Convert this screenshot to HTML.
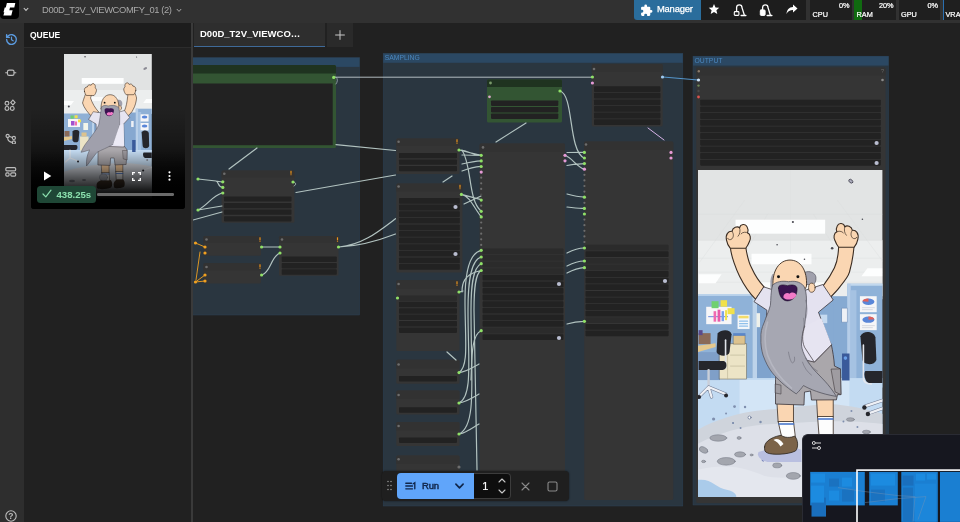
<!DOCTYPE html><html><head><meta charset="utf-8"><title>ComfyUI</title><style>
*{box-sizing:border-box;margin:0;padding:0}
html,body{width:960px;height:522px;overflow:hidden;background:#212121;font-family:"Liberation Sans",sans-serif;}
#app{position:relative;width:960px;height:522px;overflow:hidden;background:#212121;will-change:transform}
.abs{position:absolute}
#topbar{position:absolute;left:0;top:0;width:960px;height:23px;background:#2c2c2c}
#sidebar{position:absolute;left:0;top:23px;width:24.4px;height:499px;background:#2e2e2e}
#queue{position:absolute;left:24px;top:23px;width:167px;height:499px;background:#212121}
#qhead{position:absolute;left:0;top:0;width:167px;height:25px;background:#1d1d1d;border-bottom:1px solid #2c2c2c;color:#fff;font-size:8.5px;font-weight:bold;line-height:24px;padding-left:6px;letter-spacing:0}
#qsplit{position:absolute;left:191px;top:23px;width:2px;height:499px;background:#2e2e2e}
.node{position:absolute;background:#353535;border-radius:1.5px}
.node .t{position:absolute;left:0;top:0;right:0;background:#323232;border-radius:1.5px 1.5px 0 0}
.w{position:absolute;background:#222;border-radius:1px}
.d{position:absolute;width:3px;height:3px;border-radius:50%}
.grp{position:absolute}
.grp .h{position:absolute;left:0;top:0;right:0}
.gt{position:absolute;font-size:6.8px;color:#4a86bd;line-height:8px;left:1.5px;top:0.6px}
.mon{position:absolute;top:0;width:41.500px;height:19.500px;background:#1f1f1f;overflow:hidden;color:#fff;font-size:7.300px;font-weight:normal;-webkit-text-stroke:.22px #fff}
.mon b{position:absolute;right:2px;top:0.5px;line-height:9px;font-weight:normal}
.mon i{position:absolute;left:2.500px;top:10px;line-height:9px;font-style:normal}
.mon u{position:absolute;left:0;top:0;height:19.500px;display:block}
</style></head><body><div id="app"><svg width="0" height="0" style="position:absolute"><defs>
<symbol id="dude" viewBox="0 0 184.6 327.7" preserveAspectRatio="none">
<g transform="translate(-698.4,-169.6)" stroke-linejoin="round" stroke-linecap="round">
<!-- ceiling -->
<rect x="698" y="169" width="186" height="130" fill="#e2e4e4"/>
<rect x="698" y="240" width="186" height="56" fill="#eceeee"/>
<g stroke="#d9dcdc" stroke-width=".5" fill="none" opacity=".7"><path d="M698 214H884M698 240H884M698 258H884M698 272H884M698 282H884M791 169V296M745 200L700 262M838 200L884 262M768 214L740 262M814 214L845 262"/></g>
<rect x="736" y="219.400" width="89.700" height="14" fill="#fdfefe"/>
<rect x="752" y="253.500" width="60" height="10.500" fill="#fdfefe"/>
<path d="M699 274H722L716 283H699Z" fill="#fdfefe"/><path d="M868 268H883V276H862Z" fill="#fdfefe"/>
<path d="M757 282H826V288H757Z" fill="#fafbfb"/>
<!-- back walls -->
<rect x="757" y="296" width="92" height="90" fill="#86aad2"/>
<rect x="820" y="314.500" width="7.800" height="8.500" fill="#c5daf0"/>
<rect x="698.400" y="294" width="55" height="92" fill="#8fb2d8"/>
<rect x="698.400" y="294" width="55" height="1.600" fill="#c2d8ee"/>
<rect x="753" y="294" width="4.500" height="92" fill="#bdd3ea"/>
<rect x="757.500" y="300" width="14" height="84" fill="#7fa3cd"/>
<rect x="834" y="297" width="14" height="86" fill="#86aad2"/>
<rect x="847.800" y="283.500" width="36" height="104" fill="#8fb2d8"/>
<rect x="847.800" y="283.500" width="36" height="2" fill="#c2d8ee"/>
<rect x="847.800" y="283.500" width="3.500" height="104" fill="#b5cde8"/>
<rect x="851" y="290" width="6" height="96" fill="#a5c2e2"/>
<!-- floor -->
<rect x="698" y="378" width="186" height="120" fill="#c3dbf2"/>
<path d="M740 380H850V420H740Z" fill="#d3e5f6"/>
<path d="M698 430C715 420 740 412 765 410C790 408 800 406 830 404C850 405 870 410 884 414V498H698Z" fill="#cfd4dc"/>
<path d="M698 444C720 432 750 424 775 424C800 424 830 418 884 424V498H698Z" fill="#dde0e8"/>
<path d="M698 470C730 462 750 470 765 476C790 482 830 470 884 474V498H698Z" fill="#e4e7ee"/>
<path d="M698 480C712 478 716 488 728 490C736 492 738 496 736 498H698Z" fill="#aacbea"/>
<!-- posters left -->
<rect x="706.600" y="306.600" width="25.400" height="17.400" fill="#f6f6f8"/>
<rect x="712" y="301" width="7" height="7" fill="#6fd070"/><rect x="721" y="300" width="6.500" height="6.500" fill="#f1e14a"/><rect x="728" y="308" width="7" height="6" fill="#f1e14a"/>
<path d="M709 316.500H728" stroke="#6a8ae0" stroke-width="1"/><rect x="714" y="311" width="2.600" height="10.500" fill="#f06ab0"/><rect x="718" y="309.500" width="2.800" height="12" fill="#e85aa8"/><rect x="722" y="311" width="2.400" height="10" fill="#7aa0ea"/><rect x="725.500" y="310" width="2" height="10" fill="#f1e14a"/>
<rect x="738" y="314.600" width="12" height="14.200" fill="#f4f7fa"/><rect x="739" y="315.600" width="10" height="2.600" fill="#f3dc6a"/><path d="M740 321H748M740 323.500H748M740 326H748" stroke="#8fc0ea" stroke-width="1.200"/>
<rect x="757" y="313" width="3.500" height="14" fill="#eef0ea"/>
<!-- posters right -->
<rect x="860.500" y="296" width="16.800" height="16" fill="#f6f6f8"/><ellipse cx="869" cy="301.500" rx="6" ry="3.200" fill="#5a86d8"/><path d="M869 301.500L863 301A6 3.200 0 0 1 869 298.300Z" fill="#e0605a"/><path d="M863 307.500H875M863 309.500H873" stroke="#cfd2da" stroke-width=".8"/>
<rect x="860.500" y="314" width="16.800" height="16" fill="#f6f6f8"/><ellipse cx="869" cy="319.500" rx="6" ry="3.200" fill="#5a86d8"/><path d="M869 319.500L875 319A6 3.200 0 0 0 869 316.300Z" fill="#e0605a"/><path d="M863 325.500H875M863 327.500H873" stroke="#cfd2da" stroke-width=".8"/>
<rect x="842.500" y="308" width="5.500" height="14" fill="#eef1f6" stroke="#6e8cb4" stroke-width=".5"/>

<!-- left desk, boxes -->
<path d="M698.400 345.600L716 343V347L698.400 352Z" fill="#e6c98e"/>
<rect x="699" y="333" width="12" height="11" fill="#8a6a58"/><rect x="699" y="330" width="4" height="5" fill="#5a4a8a"/>
<rect x="698.400" y="352" width="22" height="28" fill="#7f9fc8"/>
<!-- cabinet -->
<rect x="720" y="343.500" width="27" height="35.500" fill="#ece4c6" stroke="#5a5a50" stroke-width=".5"/>
<path d="M728 344V379" stroke="#b9b294" stroke-width=".6"/><path d="M731 355H745M731 366H745" stroke="#b9b294" stroke-width=".6"/>
<rect x="734" y="335" width="11.500" height="9" fill="#dcc28e" stroke="#5a5040" stroke-width=".4"/><rect x="733.600" y="333" width="12.300" height="2.600" fill="#5a86c8"/>
<!-- left chair -->
<path d="M718 333C722 329 731 329 732 334L730 352C729 357 719 357 717 352Z" fill="#25262c"/>
<path d="M726 340V368" stroke="#dfe3ea" stroke-width="1.600"/>
<path d="M699 361H724C728 361 728 370 723 370H699Z" fill="#25262c"/>
<path d="M709 370V388" stroke="#c9ced8" stroke-width="2.400"/>
<path d="M709 387L726 394M709 387L700 396M709 387L712 397" stroke="#6f7a92" stroke-width="3.200"/><path d="M709 387L726 394M709 387L700 396M709 387L712 397" stroke="#eef0f5" stroke-width="2.200"/>
<circle cx="726.500" cy="395.500" r="2" fill="#25262c"/><circle cx="699.500" cy="397" r="2" fill="#25262c"/>
<!-- right chair, trash -->
<rect x="842.600" y="353.400" width="7.500" height="27" fill="#3a5a9a"/><circle cx="846" cy="358" r="1.800" fill="#6aa0e8"/>
<path d="M861 336C864 330 874 331 876 337L877 360C875 366 864 365 863 360Z" fill="#25262c"/>
<path d="M864 345V378C864 383 868 384 872 384" stroke="#e4e7ee" stroke-width="1.600" fill="none"/>
<path d="M866 371H884V383H870C865 383 864 372 866 371Z" fill="#25262c"/>
<path d="M884 400L866 406M884 408L870 413" stroke="#6f7a92" stroke-width="3.400"/><path d="M884 400L866 406M884 408L870 413" stroke="#eef0f5" stroke-width="2.400"/>
<circle cx="865" cy="407.500" r="2.200" fill="#25262c"/><circle cx="868.500" cy="414" r="2.200" fill="#25262c"/>
<!-- rocks -->
<g fill="#a3a6ae" stroke="#6f7380" stroke-width=".5">
<ellipse cx="718.700" cy="438" rx="8.500" ry="3.200"/><ellipse cx="704" cy="450" rx="4.500" ry="2.800" transform="rotate(25 704 450)"/><ellipse cx="740.500" cy="454.500" rx="5.500" ry="2.600"/><ellipse cx="726.700" cy="461.400" rx="9" ry="3.800"/><ellipse cx="777.700" cy="465.500" rx="4.500" ry="2.400"/><ellipse cx="793.800" cy="476" rx="7" ry="3.400"/><ellipse cx="704" cy="461.500" rx="2" ry="1.200"/><ellipse cx="739.500" cy="438" rx="2" ry="1.400"/><ellipse cx="752" cy="455" rx="1.500" ry="1"/>
<ellipse cx="851" cy="419.500" rx="4" ry="1.800"/><ellipse cx="867" cy="432" rx="4" ry="1.800"/>
</g>
<g fill="#7f8fae"><circle cx="735" cy="406.500" r="1.400"/><circle cx="745.500" cy="407" r="1.200"/><circle cx="726.500" cy="413.500" r="1"/><circle cx="714" cy="419" r="1.600"/><circle cx="733.500" cy="423" r=".9"/><circle cx="761" cy="422" r="1.200"/><circle cx="741" cy="428" r="1"/><circle cx="733.500" cy="423" r="1"/><circle cx="852" cy="411" r="1"/><circle cx="858" cy="427" r="1"/><circle cx="844" cy="421.500" r="1"/></g>
<circle cx="750" cy="417.500" r="1.500" fill="#fff" stroke="#4a5a80" stroke-width=".6"/>
<ellipse cx="764.600" cy="459.300" rx="2.400" ry="1.300" transform="rotate(-40 764.600 459.300)" fill="#b9c4ea" stroke="#4a5a9a" stroke-width=".6"/>
<!-- shoe shadow -->
<path d="M759 452C770 448 795 446 802 450V462H768C760 460 757 456 759 452Z" fill="#b9bfe0"/>
<!-- legs -->
<g stroke="#3a2c22" stroke-width=".8">
<path d="M777.800 402H794V422H779Z" fill="#fad6b2"/>
<path d="M817.400 398H833.800V417H818.500Z" fill="#fad6b2"/>
<path d="M779 421.500H794L796 438L783 439Z" fill="#fdfdfd"/>
<path d="M818.500 416.500H833.800L833.800 436H820Z" fill="#fdfdfd"/>
</g>
<path d="M779.400 424H794.200" stroke="#3f6fc8" stroke-width="1.300"/><path d="M818.800 419H833.600" stroke="#3f6fc8" stroke-width="1.300"/>
<path d="M765 447C765 440 776 436 782 435.300C784 438 792 438 795 436C799 440 799 448 796 451C788 455 772 455 768 453C765 452 765 450 765 447Z" fill="#7b6349" stroke="#2a2420" stroke-width=".8"/>
<path d="M774 440C777 438 781 439 784 444L781 446.500C779 443 777 441.500 774 440Z" fill="#fdfdfd"/>
<!-- arms -->
<g fill="#fad6b2" stroke="#3a2c22" stroke-width="1.100">
<path d="M730.800 247C731.500 256 737 270 740 276C745 286 750 293 756 299L764.500 286.600C758 280 754 272 752 267.600C749 262 747.500 255 746.200 247Z"/>
<path d="M839.200 246C839 254 837.500 262 835 267.600C832 274 828 280 823.600 285.600L830 298C834 294 838 290 840.400 286.600C846 280 849 276 850 272C852 265 853.800 256 854.600 246Z"/>
<g id="fist"><path d="M727 240C725.500 234 729 230.500 732.500 231C733 227 738 225.500 740 227.500C741 223.500 746 223 747.500 226.500C749 229 748.500 231 748 232.500C751 234 751.500 238 750 241C748.500 245 747 247 746.200 248L730.800 248C729 246 727.500 243 727 240Z"/>
<path d="M732.500 231C734 233 734.500 236 732.500 238.500C731 240 728.500 239.500 728 238M740 227.500C741 230 740.500 234 738.500 236M741.500 233.500C743 231.500 747 231.500 748 232.500" fill="none" stroke-width=".7"/></g>
<use href="#fist" transform="translate(1585.400,-1) scale(-1,1)"/>
</g>
<!-- shorts -->
<path d="M776 380L776 404L804.500 405L805 392L811 391L812 400L837 399.800L838 394.600L841.500 394.600L841 368.800L835 366C834.600 358 833 350 832 345L780 347Z" fill="#aaa7ab" stroke="#3a3438" stroke-width=".8"/>
<path d="M832 369L841 368.800L841.500 394.600L836 392Z" fill="#9f9ca1" stroke="#3a3438" stroke-width=".6"/>
<path d="M776 384L781.500 385L781.500 394L776 393Z" fill="#9f9ca1" stroke="#3a3438" stroke-width=".5"/>
<!-- shirt -->
<path d="M764 287L754.500 301.500L767.400 310L766 330L764 350L815 362L832 344.600L829.500 340L819 312L833.800 299.800L823.400 284.300L806 290L775 290Z" fill="#e4e2f0" stroke="#3a3438" stroke-width=".8"/>
<!-- hair/ear -->
<path d="M805.500 272C810 270 816 272.500 816.500 277C817 281 815 284 813 285L806 284Z" fill="#a0a0ac" stroke="#4a4a55" stroke-width=".6"/>
<path d="M773.500 275C772 278 771.500 284 772.500 290" stroke="#a0a0ac" stroke-width="2.200" fill="none"/>
<ellipse cx="812.400" cy="287.500" rx="3.300" ry="4.600" fill="#fad6b2" stroke="#3a2c22" stroke-width=".7"/>
<!-- head -->
<path d="M773.400 286C772.500 270 780 259.800 790.500 259.800C801 259.800 808 270 807 286C804 296 777 296 773.400 286Z" fill="#fad6b2" stroke="#3a2c22" stroke-width=".9"/>
<circle cx="779" cy="276.500" r="1.500" fill="#111"/><circle cx="798.400" cy="276.500" r="1.500" fill="#111"/>
<!-- beard -->
<path d="M773 285C771 292 771.500 299 770.900 305C769 312 766 318 764.800 322C762 328 761 333 761.400 338C761 344 762 350 763.500 355C766 362 769 368 773 373C778 379 785 386 796.700 393.800C800 391 802 388 804 385.500C810 389 822 394 837 396.400C833 390 829 385 826 381.700C820 375 814 370 810.500 364.500C806 358 802 350 802 343.800C802 336 804 330 805.300 324C806 316 807.500 308 807 299.800C807 294 806 289 804.500 286C800 281 795 280.500 789 281.500C783 280.500 777 281 773 285Z" fill="#a6a7b2" stroke="#55555f" stroke-width=".8"/>
<path d="M768 322C765 332 765 345 768 355C772 366 780 378 792 388" stroke="#b9bac4" stroke-width="1.600" fill="none" opacity=".8"/>
<path d="M789 352C790 358 791 361 793 363C795 362 795.500 360 795 357M803 362C805 368 808 372 812 375M806 358C809 364 813 368 818 371" stroke="#6e6f7a" stroke-width=".6" fill="none"/>
<path d="M806 300C808 305 808 312 806.500 318M804 318C805 324 804 330 803.500 336" stroke="#7f808b" stroke-width=".6" fill="none"/>
<!-- mouth -->
<path d="M779 288C778.500 284.500 783 284 788 285.500C792 284 798 284.500 797.600 289C797.500 296 793 300.700 788 300.700C783 300.700 779.500 296 779 288Z" fill="#3a1450" stroke="#1a0a25" stroke-width=".6"/>
<path d="M783.800 297C784 293 788 292 790 293.500C792 291.500 796.500 292 796.700 295C796 299.500 786 301 783.800 297Z" fill="#f27ac8"/>
<!-- shirt flap over beard -->
<path d="M805.300 326L822 318L832 344.600L814.800 362L805 347C802 340 803 333 805.300 326Z" fill="#e6e4f1"/><path d="M832 344.600L814.800 362L805 347C802 340 803 333 805.300 326" fill="none" stroke="#3a3438" stroke-width=".7"/>
<!-- debris -->
<ellipse cx="851.400" cy="180.800" rx="2.300" ry="1.600" transform="rotate(40 851.400 180.800)" fill="#aab" stroke="#4a4a55" stroke-width=".8"/>
<g fill="#4a4a52"><circle cx="793.400" cy="221.700" r="1.100"/><circle cx="863" cy="219" r=".8"/><circle cx="777.600" cy="244.500" r=".8"/><circle cx="832.700" cy="248" r="1.300"/><circle cx="805" cy="259" r=".8"/></g>
</g>
</symbol><symbol id="dude2" viewBox="0 0 87.600 155.700" preserveAspectRatio="none">
<g transform="translate(-64,-54)" stroke-linejoin="round" stroke-linecap="round">
<rect x="63" y="53" width="90" height="60" fill="#e1e3e3"/>
<rect x="63" y="90" width="90" height="24" fill="#eceeee"/>
<rect x="81.700" y="78" width="41.800" height="5.800" fill="#fdfefe"/>
<rect x="88" y="97" width="30" height="4" fill="#fafbfb"/>
<path d="M64 101H74L71 105H64Z" fill="#fdfefe"/><path d="M146 99H152V103H143Z" fill="#fdfefe"/>
<!-- walls -->
<rect x="63" y="113.500" width="30" height="40" fill="#8fb0d5"/>
<rect x="92" y="114" width="3" height="40" fill="#bdd3ea"/>
<rect x="94" y="112.500" width="43" height="42" fill="#86a8d0"/>
<rect x="135.600" y="108.700" width="17" height="48" fill="#8fb0d5"/>
<rect x="135.600" y="108.700" width="2.400" height="48" fill="#b8cfe8"/>
<rect x="138" y="112" width="3" height="44" fill="#a5c2e2"/>
<!-- floor -->
<rect x="63" y="150" width="90" height="60" fill="#c3daf0"/>
<path d="M63 172C80 166 100 164 120 163C135 163 145 165 153 167V210H63Z" fill="#d3d7de"/>
<!-- posters -->
<rect x="68" y="119" width="12" height="8" fill="#f6f6f8"/><rect x="70.500" y="115.500" width="3.200" height="3.200" fill="#6fd070"/><rect x="74.600" y="115.300" width="3" height="3" fill="#f1e14a"/><rect x="78" y="119.500" width="3" height="2.800" fill="#f1e14a"/>
<rect x="71" y="121" width="3.500" height="4.500" fill="#a050d0"/><rect x="75" y="121.500" width="2" height="4" fill="#f06ab0"/>
<rect x="83.300" y="123" width="4.700" height="7" fill="#f2f5ea"/>
<rect x="140.400" y="114.300" width="8" height="7.200" fill="#f6f6f8"/><ellipse cx="144.400" cy="117" rx="2.800" ry="1.500" fill="#5a86d8"/>
<rect x="140.400" y="123" width="8" height="7.400" fill="#f6f6f8"/><ellipse cx="144.400" cy="126" rx="2.800" ry="1.500" fill="#5a86d8"/>
<rect x="131" y="121" width="2.500" height="6" fill="#eef1f6"/>
<!-- furniture -->
<path d="M64 137L72 136V139L64 141Z" fill="#e6c98e"/><rect x="64.500" y="131" width="5" height="5.500" fill="#8a6a58"/>
<rect x="80" y="136.500" width="8.500" height="14" fill="#ece4c6"/><rect x="81.500" y="132.500" width="5" height="4" fill="#dcc28e"/>
<path d="M72.500 131.500C74 129.500 79 129.500 79.300 132L78.500 140.500C78 143 73.500 143 72.500 140.500Z" fill="#25262c"/>
<path d="M64 145H76C78 145 78 150 75.500 150H64Z" fill="#25262c"/>
<path d="M70 150V158L78 161M70 158L65.500 162" stroke="#dfe3ea" stroke-width="1.200" fill="none"/>
<circle cx="78" cy="161.500" r="1" fill="#25262c"/>
<path d="M141.500 132.500C143 129.500 148 130 148.600 133L149 146C148 149 143 149 142.500 146Z" fill="#25262c"/>
<path d="M143.500 152.500H152V158H145C142.500 158 142.500 153 143.500 152.500Z" fill="#25262c"/>
<path d="M152 167L143.500 170" stroke="#dfe3ea" stroke-width="1.200"/><circle cx="143" cy="170.500" r="1.100" fill="#25262c"/>
<rect x="132" y="140" width="3.400" height="12" fill="#3a5a9a"/>
<!-- legs -->
<g stroke="#3a2c22" stroke-width=".5">
<path d="M101.500 164H109V173H102Z" fill="#f0c79a"/><path d="M115.500 164H122.700V172H116Z" fill="#f0c79a"/>
<path d="M102 172.500H109L109.500 181H103.500Z" fill="#f4f4f4"/><path d="M116 171.500H122.700V180H116.500Z" fill="#f4f4f4"/>
</g>
<path d="M102 174H109M116 173.500H122.700" stroke="#3f6fc8" stroke-width=".8"/>
<path d="M96.500 185C96.500 181.500 101 180 104 179.500C106 181 109 181 110.500 180C112.500 182 112.500 186 111 187.500C107 189.500 99 189.500 97.500 188.500C96.500 188 96.500 187 96.500 185Z" fill="#4a3a2c"/>
<path d="M113.500 184C114 181 116 180 117 179.500H123C125 181 125 186 123.500 187C120 188.500 115 188.500 114 187.500Z" fill="#4a3a2c"/>
<ellipse cx="103.400" cy="177.300" rx="4" ry="3.300" fill="#b9bcc6" stroke="#6f7380" stroke-width=".4"/>
<!-- arms -->
<g fill="#fad6b2" stroke="#3a2c22" stroke-width=".6">
<path d="M85.500 94C84 98 83 101 82.500 103C84 108 88 113 92 116.700L98.600 112C95 108 92 103 90.500 98C91 96 91.500 95 92 94Z"/>
<path d="M127.500 93C127.500 95 127.800 96 127.500 96.600C127 102 126 107 124.300 111L126.700 116.700C130 114 132 112 133 109.500C135 106 136 102 136.400 98C136 96 135.500 94.500 134.500 93Z"/>
<path d="M84.400 91.500C83.600 88.500 85.500 86.700 87.200 87C87.500 85 89.800 84.200 91 85.300C91.500 83.300 94 83 94.800 84.800C95.500 86 95.300 87 95 87.700C96.500 88.500 96.700 90.500 96 92C95.300 94 94.500 95 94 95.500L86.300 95.500C85.400 94.500 84.700 93 84.400 91.500Z"/>
<path d="M135.600 90.700C136.400 87.700 134.500 85.900 132.800 86.200C132.500 84.200 130.200 83.400 129 84.500C128.500 82.500 126 82.200 125.200 84C124.500 85.200 124.700 86.200 125 86.900C123.500 87.700 123.300 89.700 124 91.200C124.700 93.200 125.500 94.200 126 94.700L133.700 94.700C134.600 93.700 135.300 92.200 135.600 90.700Z"/>
</g>
<!-- shorts -->
<path d="M98 146L97.800 165L110 165.500L110.500 158L114 158L115 165L126 164.500L127 150L124 146Z" fill="#aaa7ab" stroke="#3a3438" stroke-width=".5"/>
<path d="M122.700 150.500H127L127 160L123.500 159Z" fill="#9a979c" stroke="#3a3438" stroke-width=".4"/>
<!-- shirt -->
<path d="M93 112L88.500 119.500L96 124L97 146L124 147L123.500 124L129.500 117.500L124.300 110.500L116 113H102Z" fill="#e6e4f1" stroke="#3a3438" stroke-width=".5"/>
<!-- head -->
<path d="M117.500 100C120 99 122.500 101 122.200 104C122 106 121 107 120 107.500L117 106Z" fill="#a0a0ac"/>
<ellipse cx="119.700" cy="108" rx="1.700" ry="2.400" fill="#fad6b2" stroke="#3a2c22" stroke-width=".4"/>
<path d="M101 109C100.500 100 104.500 94.700 110 94.700C115.500 94.700 119.200 100 118.700 109C117 114 103 114 101 109Z" fill="#fad6b2" stroke="#3a2c22" stroke-width=".6"/>
<circle cx="104.500" cy="102.700" r=".9" fill="#111"/><circle cx="114.700" cy="102.700" r=".9" fill="#111"/>
<!-- beard -->
<path d="M101.500 107C103 105 106 105 108 106C111 105 116 105 118.500 107.500C120 112 119.500 120 119.500 125C118 133 116 139 113 144.300C107 148 101 150 97 152.300C93 157 90 162 86.500 166C86 160 87 155 89.500 150C86 151 83 152 81 152.300C83 147 86 143 89 139.500C93 134 97 129 98.600 125C100 119 100.500 112 101.500 107Z" fill="#a0a0ac" stroke="#55555f" stroke-width=".5"/>
<path d="M104.500 110C104.300 108 107 107.800 109 108.500C111 107.800 114 108 113.800 110.500C113.700 114 111.500 116.200 109 116.200C106.500 116.200 104.800 114 104.500 110Z" fill="#3a1450"/>
<path d="M106.500 114C107 112 109 111.800 110 112.500C111 111.500 113 112 113 113.500C112.500 115.800 107.500 116.300 106.500 114Z" fill="#f27ac8"/>
<path d="M113 144.300L119.500 125L123.500 124L124 146Z" fill="#eceaf5"/>
<!-- debris -->
<g fill="#4a4a52"><circle cx="85" cy="56.800" r=".8"/><circle cx="136.400" cy="57" r=".6"/><circle cx="68.800" cy="106.600" r="1"/></g>
<ellipse cx="145" cy="68.500" rx="2" ry="1.100" transform="rotate(-25 145 68.500)" fill="#8a8a94"/>
<g fill="#8a8d98"><ellipse cx="72" cy="181" rx="3" ry="1.200"/><ellipse cx="84" cy="180" rx="2" ry="1"/><circle cx="147" cy="160" r="1"/><circle cx="141" cy="176" r=".8"/></g>
</g>
</symbol></defs></svg>

<div id="canvas" class="abs" style="left:193px;top:47px;width:767px;height:475px;overflow:hidden">
<svg class="abs" style="left:0;top:0" width="767" height="475" viewBox="193 47 767 475"><rect x="180.0" y="57.7" width="179.5" height="257.3" fill="#2a3640" stroke="#2c4256" stroke-width=".5"/><rect x="180.0" y="57.7" width="179.5" height="9.2" fill="#2b4863"/><rect x="383.2" y="53.5" width="299.6" height="452.5" fill="#2a3640" stroke="#2c4256" stroke-width=".5"/><rect x="383.2" y="53.5" width="299.6" height="9.3" fill="#2b4863"/><text x="384.7" y="60.4" font-size="6.8" fill="#4a86bd" font-family="Liberation Sans, sans-serif">SAMPLING</text><rect x="693.0" y="56.2" width="195.5" height="448.8" fill="#2a3640" stroke="#2c4256" stroke-width=".5"/><rect x="693.0" y="56.2" width="195.5" height="9.4" fill="#2b4863"/><text x="694.5" y="63.1" font-size="6.8" fill="#4a86bd" font-family="Liberation Sans, sans-serif">OUTPUT</text><rect x="180.0" y="65.0" width="156.0" height="83.0" rx="1.5" fill="#335533"/><path d="M180.0 73.4V66.5a1.5 1.5 0 0 1 1.5 -1.5H334.5a1.5 1.5 0 0 1 1.5 1.5V73.4Z" fill="#1f3320"/><rect x="180" y="83.5" width="152.7" height="61.7" fill="#222"/><rect x="221.6" y="170.5" width="72.8" height="52.3" rx="1.5" fill="#353535"/><path d="M221.6 177.5V172.0a1.5 1.5 0 0 1 1.5 -1.5H292.9a1.5 1.5 0 0 1 1.5 1.5V177.5Z" fill="#323232"/><rect x="224.0" y="196.40" width="67.5" height="5.20" rx=".8" fill="#222"/><rect x="224.0" y="203.00" width="67.5" height="5.20" rx=".8" fill="#222"/><rect x="224.0" y="209.60" width="67.5" height="5.20" rx=".8" fill="#222"/><rect x="224.0" y="216.20" width="67.5" height="5.20" rx=".8" fill="#222"/><rect x="203.4" y="236.0" width="57.6" height="19.7" rx="1.5" fill="#353535"/><path d="M203.4 243.0V237.5a1.5 1.5 0 0 1 1.5 -1.5H259.5a1.5 1.5 0 0 1 1.5 1.5V243.0Z" fill="#323232"/><rect x="203.4" y="263.3" width="57.6" height="20.1" rx="1.5" fill="#353535"/><path d="M203.4 270.3V264.8a1.5 1.5 0 0 1 1.5 -1.5H259.5a1.5 1.5 0 0 1 1.5 1.5V270.3Z" fill="#323232"/><rect x="279.0" y="236.0" width="59.5" height="39.8" rx="1.5" fill="#353535"/><path d="M279.0 243.0V237.5a1.5 1.5 0 0 1 1.5 -1.5H337.0a1.5 1.5 0 0 1 1.5 1.5V243.0Z" fill="#323232"/><rect x="281.7" y="256.60" width="55.1" height="5.40" rx=".8" fill="#222"/><rect x="281.7" y="263.00" width="55.1" height="5.40" rx=".8" fill="#222"/><rect x="281.7" y="269.30" width="55.1" height="5.40" rx=".8" fill="#222"/><rect x="487.0" y="79.5" width="75.0" height="43.1" rx="1.5" fill="#335533"/><path d="M487.0 87.0V81.0a1.5 1.5 0 0 1 1.5 -1.5H560.5a1.5 1.5 0 0 1 1.5 1.5V87.0Z" fill="#1f3320"/><rect x="491.0" y="100.50" width="67.3" height="5.40" rx=".8" fill="#222"/><rect x="491.0" y="107.00" width="67.3" height="5.40" rx=".8" fill="#222"/><rect x="491.0" y="113.50" width="67.3" height="5.40" rx=".8" fill="#222"/><rect x="591.8" y="64.0" width="70.9" height="62.4" rx="1.5" fill="#353535"/><path d="M591.8 72.0V65.5a1.5 1.5 0 0 1 1.5 -1.5H661.2a1.5 1.5 0 0 1 1.5 1.5V72.0Z" fill="#323232"/><rect x="594.0" y="86.20" width="66.4" height="5.80" rx=".8" fill="#222"/><rect x="594.0" y="92.80" width="66.4" height="5.80" rx=".8" fill="#222"/><rect x="594.0" y="99.40" width="66.4" height="5.80" rx=".8" fill="#222"/><rect x="594.0" y="106.00" width="66.4" height="5.80" rx=".8" fill="#222"/><rect x="594.0" y="112.60" width="66.4" height="5.80" rx=".8" fill="#222"/><rect x="594.0" y="119.20" width="66.4" height="5.80" rx=".8" fill="#222"/><rect x="396.3" y="138.6" width="63.2" height="35.4" rx="1.5" fill="#353535"/><path d="M396.3 146.1V140.1a1.5 1.5 0 0 1 1.5 -1.5H458.0a1.5 1.5 0 0 1 1.5 1.5V146.1Z" fill="#323232"/><rect x="399.0" y="153.00" width="58.0" height="5.30" rx=".8" fill="#222"/><rect x="399.0" y="159.50" width="58.0" height="5.30" rx=".8" fill="#222"/><rect x="399.0" y="166.00" width="58.0" height="5.30" rx=".8" fill="#222"/><rect x="396.3" y="183.6" width="66.1" height="88.9" rx="1.5" fill="#353535"/><path d="M396.3 191.6V185.1a1.5 1.5 0 0 1 1.5 -1.5H460.9a1.5 1.5 0 0 1 1.5 1.5V191.6Z" fill="#323232"/><rect x="399.0" y="198.00" width="60.8" height="5.80" rx=".8" fill="#222"/><rect x="399.0" y="204.60" width="60.8" height="5.80" rx=".8" fill="#222"/><rect x="399.0" y="211.20" width="60.8" height="5.80" rx=".8" fill="#222"/><rect x="399.0" y="217.80" width="60.8" height="5.80" rx=".8" fill="#222"/><rect x="399.0" y="224.40" width="60.8" height="5.80" rx=".8" fill="#222"/><rect x="399.0" y="231.00" width="60.8" height="5.80" rx=".8" fill="#222"/><rect x="399.0" y="237.60" width="60.8" height="5.80" rx=".8" fill="#222"/><rect x="399.0" y="244.20" width="60.8" height="5.80" rx=".8" fill="#222"/><rect x="399.0" y="250.80" width="60.8" height="5.80" rx=".8" fill="#222"/><rect x="399.0" y="257.40" width="60.8" height="5.80" rx=".8" fill="#222"/><rect x="399.0" y="264.00" width="60.8" height="5.80" rx=".8" fill="#222"/><rect x="396.3" y="280.3" width="63.2" height="70.7" rx="1.5" fill="#353535"/><path d="M396.3 288.8V281.8a1.5 1.5 0 0 1 1.5 -1.5H458.0a1.5 1.5 0 0 1 1.5 1.5V288.8Z" fill="#323232"/><rect x="399.0" y="295.40" width="58.0" height="5.50" rx=".8" fill="#2b2b2b"/><rect x="399.0" y="301.80" width="58.0" height="5.50" rx=".8" fill="#222"/><rect x="399.0" y="308.20" width="58.0" height="5.50" rx=".8" fill="#222"/><rect x="399.0" y="314.60" width="58.0" height="5.50" rx=".8" fill="#222"/><rect x="399.0" y="321.00" width="58.0" height="5.50" rx=".8" fill="#222"/><rect x="399.0" y="327.40" width="58.0" height="5.50" rx=".8" fill="#222"/><rect x="396.3" y="359.8" width="63.2" height="24.0" rx="1.5" fill="#353535"/><path d="M396.3 368.3V361.3a1.5 1.5 0 0 1 1.5 -1.5H458.0a1.5 1.5 0 0 1 1.5 1.5V368.3Z" fill="#323232"/><rect x="399.0" y="376.00" width="58.0" height="5.50" rx=".8" fill="#222"/><rect x="396.3" y="390.5" width="63.2" height="24.0" rx="1.5" fill="#353535"/><path d="M396.3 399.0V392.0a1.5 1.5 0 0 1 1.5 -1.5H458.0a1.5 1.5 0 0 1 1.5 1.5V399.0Z" fill="#323232"/><rect x="399.0" y="407.30" width="58.0" height="5.50" rx=".8" fill="#222"/><rect x="396.3" y="422.0" width="63.2" height="24.0" rx="1.5" fill="#353535"/><path d="M396.3 430.5V423.5a1.5 1.5 0 0 1 1.5 -1.5H458.0a1.5 1.5 0 0 1 1.5 1.5V430.5Z" fill="#323232"/><rect x="399.0" y="437.40" width="58.0" height="5.50" rx=".8" fill="#222"/><rect x="396.3" y="455.5" width="63.2" height="24.5" rx="1.5" fill="#353535"/><path d="M396.3 464.0V457.0a1.5 1.5 0 0 1 1.5 -1.5H458.0a1.5 1.5 0 0 1 1.5 1.5V464.0Z" fill="#323232"/><rect x="479.6" y="143.4" width="85.4" height="356.6" rx="1.5" fill="#353535"/><path d="M479.6 151.9V144.9a1.5 1.5 0 0 1 1.5 -1.5H563.5a1.5 1.5 0 0 1 1.5 1.5V151.9Z" fill="#323232"/><rect x="482.6" y="248.40" width="80.8" height="5.80" rx=".8" fill="#2b2b2b"/><rect x="482.6" y="255.00" width="80.8" height="5.80" rx=".8" fill="#2b2b2b"/><rect x="482.6" y="261.60" width="80.8" height="5.80" rx=".8" fill="#2b2b2b"/><rect x="482.6" y="268.20" width="80.8" height="5.80" rx=".8" fill="#2b2b2b"/><rect x="482.6" y="274.80" width="80.8" height="5.80" rx=".8" fill="#222"/><rect x="482.6" y="281.40" width="80.8" height="5.80" rx=".8" fill="#222"/><rect x="482.6" y="288.00" width="80.8" height="5.80" rx=".8" fill="#222"/><rect x="482.6" y="294.60" width="80.8" height="5.80" rx=".8" fill="#222"/><rect x="482.6" y="301.20" width="80.8" height="5.80" rx=".8" fill="#222"/><rect x="482.6" y="307.80" width="80.8" height="5.80" rx=".8" fill="#222"/><rect x="482.6" y="314.40" width="80.8" height="5.80" rx=".8" fill="#222"/><rect x="482.6" y="321.00" width="80.8" height="5.80" rx=".8" fill="#222"/><rect x="482.6" y="327.60" width="80.8" height="5.80" rx=".8" fill="#2b2b2b"/><rect x="482.6" y="334.20" width="80.8" height="5.80" rx=".8" fill="#222"/><rect x="584.2" y="141.5" width="89.1" height="358.5" rx="1.5" fill="#353535"/><path d="M584.2 150.0V143.0a1.5 1.5 0 0 1 1.5 -1.5H671.8a1.5 1.5 0 0 1 1.5 1.5V150.0Z" fill="#323232"/><rect x="585.5" y="244.70" width="83.1" height="5.80" rx=".8" fill="#2b2b2b"/><rect x="585.5" y="251.30" width="83.1" height="5.80" rx=".8" fill="#222"/><rect x="585.5" y="257.90" width="83.1" height="5.80" rx=".8" fill="#2b2b2b"/><rect x="585.5" y="264.50" width="83.1" height="5.80" rx=".8" fill="#2b2b2b"/><rect x="585.5" y="271.10" width="83.1" height="5.80" rx=".8" fill="#222"/><rect x="585.5" y="277.70" width="83.1" height="5.80" rx=".8" fill="#222"/><rect x="585.5" y="284.30" width="83.1" height="5.80" rx=".8" fill="#222"/><rect x="585.5" y="290.90" width="83.1" height="5.80" rx=".8" fill="#222"/><rect x="585.5" y="297.50" width="83.1" height="5.80" rx=".8" fill="#222"/><rect x="585.5" y="304.10" width="83.1" height="5.80" rx=".8" fill="#222"/><rect x="585.5" y="310.70" width="83.1" height="5.80" rx=".8" fill="#222"/><rect x="585.5" y="317.30" width="83.1" height="5.80" rx=".8" fill="#2b2b2b"/><rect x="585.5" y="323.90" width="83.1" height="5.80" rx=".8" fill="#222"/><rect x="585.5" y="330.50" width="83.1" height="5.80" rx=".8" fill="#222"/><rect x="696.2" y="67.4" width="189.4" height="435.6" rx="1.5" fill="#353535"/><path d="M696.2 75.4V68.9a1.5 1.5 0 0 1 1.5 -1.5H884.1a1.5 1.5 0 0 1 1.5 1.5V75.4Z" fill="#323232"/><rect x="700.2" y="99.80" width="180.6" height="5.90" rx=".8" fill="#222"/><rect x="700.2" y="106.46" width="180.6" height="5.90" rx=".8" fill="#222"/><rect x="700.2" y="113.12" width="180.6" height="5.90" rx=".8" fill="#222"/><rect x="700.2" y="119.78" width="180.6" height="5.90" rx=".8" fill="#222"/><rect x="700.2" y="126.44" width="180.6" height="5.90" rx=".8" fill="#222"/><rect x="700.2" y="133.10" width="180.6" height="5.90" rx=".8" fill="#222"/><rect x="700.2" y="139.76" width="180.6" height="5.90" rx=".8" fill="#222"/><rect x="700.2" y="146.42" width="180.6" height="5.90" rx=".8" fill="#222"/><rect x="700.2" y="153.08" width="180.6" height="5.90" rx=".8" fill="#222"/><rect x="700.2" y="159.74" width="180.6" height="5.90" rx=".8" fill="#222"/></svg>
<svg class="abs" style="left:0;top:0" width="767" height="475" viewBox="193 47 767 475" fill="none" stroke-linecap="round">
<path d="M334 77.2 L592 77.2" stroke="#c3ccd0" stroke-width="0.9"/>
<path d="M336 77 q3 3 0 7" stroke="#b2c3c0" stroke-width="0.7"/>
<path d="M336 144.6 L395.5 150.5" stroke="#b2c3c0" stroke-width="1.2"/>
<path d="M257 148 L229 169" stroke="#b2c3c0" stroke-width="1.2"/>
<path d="M198 179 L216 181 M216 181 C219 182 218 187 222 187 M216 181 L222 182" stroke="#b2c3c0" stroke-width="1.2"/>
<path d="M198 210 C208 205 212 196 222 193 M198 210 L222 206 M193 220 L222 212" stroke="#b2c3c0" stroke-width="1.2"/>
<path d="M294 182 q4 2 0 4" stroke="#b2c3c0" stroke-width="0.7"/>
<path d="M296 192.5 L395.5 175" stroke="#b2c3c0" stroke-width="1.2"/>
<path d="M262 247 L280 247" stroke="#b2c3c0" stroke-width="1.2"/>
<path d="M262 275 C271 272 271 256 280 253" stroke="#b2c3c0" stroke-width="1.2"/>
<path d="M339 247 C362 245 378 232 395.5 218.7 M339 247 C362 246 380 240 395.5 234" stroke="#b2c3c0" stroke-width="1.2"/>
<path d="M195.5 243 L205 247 M195.5 282 L205 275 M195.5 282 L205 281 M200 252 L196 280" stroke="#f0a020" stroke-width="0.9"/>
<path d="M526 123 L496 142" stroke="#b2c3c0" stroke-width="1.2"/>
<path d="M560 91 C574 95 568 150 584 158" stroke="#b2c3c0" stroke-width="1.2"/>
<path d="M648 128 L664 140" stroke="#d8b4e8" stroke-width="1"/>
<path d="M663 77 L698 80" stroke="#5aa2dc" stroke-width="0.9"/>
<path d="M459 150 L481 155.3 M459 150 C470 150 472 156 481 155.3 M462 155 L481 155.5 M462 164 C470 162 474 161 481 160.8 M462 171 C470 168 474 167 481 166.4" stroke="#b2c3c0" stroke-width="1.2"/>
<path d="M462 150 C472 165 468 200 481 211 M461.4 194.4 L481 199.7 M461.4 194.4 C470 196 474 208 481 216.5 M464 204 L481 196" stroke="#b2c3c0" stroke-width="1.2"/>
<path d="M452 176 L443 182" stroke="#b2c3c0" stroke-width="1.2"/>
<path d="M565 155.3 C572 158 576 166 584 169.3 M567 152.5 L584 152.4 M567 165.5 C574 164 578 164 584 163.7 M567 194 C574 196 578 197 584 197 M567 207 C574 208 578 208.5 584 208.3" stroke="#b2c3c0" stroke-width="1.2"/>
<path d="M567 253 C573 250 578 248 584 248 M567 266 C573 263 578 261 584 261 M567 273 C573 270 578 268 584 267.7 M567 324 C573 322 578 321.3 584 321.3" stroke="#b2c3c0" stroke-width="1.2"/>
<path d="M481 250.3 C467 254 465 280 465 300 C465 340 469 366 459 372.6" stroke="#b2c3c0" stroke-width="1.2"/>
<path d="M481 257 C469 261 468 290 468 310 C468 360 473 396 459 403" stroke="#b2c3c0" stroke-width="1.2"/>
<path d="M481 263.7 C472 268 471 290 471 310 C471 380 477 426 459 434" stroke="#b2c3c0" stroke-width="1.2"/>
<path d="M481 270.5 C463 274 462 285 462 292 M481 270.5 C475 274 474 290 474 310 L477 470" stroke="#b2c3c0" stroke-width="1.2"/>
<path d="M481 330.7 C471 335 472 360 471 380" stroke="#b2c3c0" stroke-width="1.2"/>
<path d="M459 292 L463 291 M459 372.6 C466 372 472 368 479 364 M459 403 C466 402 472 398 479 394 M459 434 C466 433 472 428 479 424" stroke="#b2c3c0" stroke-width="1.2"/>
<path d="M447 352 L456 360" stroke="#b2c3c0" stroke-width="1.2"/>
</svg>
<svg class="abs" style="left:0;top:0" width="767" height="475" viewBox="193 47 767 475">
<circle cx="333.7" cy="77.4" r="1.6" fill="#8fe068"/>
<circle cx="222.8" cy="181.8" r="1.6" fill="#8fe068"/>
<circle cx="222.8" cy="187.4" r="1.6" fill="#8fe068"/>
<circle cx="222.8" cy="193.0" r="1.6" fill="#8fe068"/>
<circle cx="293.0" cy="182.0" r="1.6" fill="#8fe068"/>
<circle cx="224.3" cy="173.8" r="1.3" fill="#6d6d6d"/>
<circle cx="198.0" cy="179.0" r="1.6" fill="#8fe068"/>
<circle cx="198.0" cy="210.0" r="1.6" fill="#8fe068"/>
<circle cx="206.5" cy="239.5" r="1.3" fill="#6d6d6d"/>
<circle cx="206.5" cy="267.0" r="1.3" fill="#6d6d6d"/>
<circle cx="195.5" cy="243.0" r="1.6" fill="#f0a020"/>
<circle cx="205.0" cy="247.0" r="1.6" fill="#f0a020"/>
<circle cx="205.0" cy="253.0" r="1.6" fill="#f0a020"/>
<circle cx="205.0" cy="275.0" r="1.6" fill="#f0a020"/>
<circle cx="205.0" cy="281.0" r="1.6" fill="#f0a020"/>
<circle cx="195.5" cy="282.0" r="1.6" fill="#f0a020"/>
<circle cx="261.6" cy="247.0" r="1.6" fill="#8fe068"/>
<circle cx="261.6" cy="275.0" r="1.6" fill="#8fe068"/>
<circle cx="280.0" cy="247.0" r="1.6" fill="#8fe068"/>
<circle cx="280.0" cy="253.0" r="1.6" fill="#8fe068"/>
<circle cx="338.5" cy="247.0" r="1.6" fill="#8fe068"/>
<circle cx="282.0" cy="239.5" r="1.3" fill="#6d6d6d"/>
<circle cx="560.0" cy="91.0" r="1.6" fill="#8fe068"/>
<circle cx="490.5" cy="83.0" r="1.4" fill="#7a9a6a"/>
<circle cx="489.5" cy="96.8" r="1.4" fill="#d9a9c9"/>
<circle cx="592.4" cy="77.0" r="1.6" fill="#8fe068"/>
<circle cx="592.4" cy="83.0" r="1.6" fill="#e59ad6"/>
<circle cx="662.5" cy="77.0" r="1.6" fill="#9cc8ee"/>
<circle cx="594.0" cy="69.0" r="1.3" fill="#6d6d6d"/>
<circle cx="459.0" cy="150.0" r="1.6" fill="#8fe068"/>
<circle cx="398.6" cy="141.7" r="1.3" fill="#6d6d6d"/>
<circle cx="461.4" cy="194.4" r="1.6" fill="#8fe068"/>
<circle cx="398.6" cy="186.5" r="1.3" fill="#6d6d6d"/>
<circle cx="459.0" cy="292.0" r="1.6" fill="#8fe068"/>
<circle cx="397.5" cy="298.0" r="1.6" fill="#8fe068"/>
<circle cx="398.6" cy="284.0" r="1.3" fill="#6d6d6d"/>
<circle cx="459.0" cy="372.6" r="1.6" fill="#8fe068"/>
<circle cx="398.6" cy="364.5" r="1.3" fill="#6d6d6d"/>
<circle cx="459.0" cy="403.0" r="1.6" fill="#8fe068"/>
<circle cx="398.6" cy="395.0" r="1.3" fill="#6d6d6d"/>
<circle cx="459.0" cy="434.0" r="1.6" fill="#8fe068"/>
<circle cx="398.6" cy="426.0" r="1.3" fill="#6d6d6d"/>
<circle cx="459.0" cy="467.0" r="1.6" fill="#6d6d6d"/>
<circle cx="398.6" cy="459.3" r="1.3" fill="#6d6d6d"/>
<circle cx="481.2" cy="155.3" r="1.6" fill="#8fe068"/>
<circle cx="481.2" cy="160.9" r="1.6" fill="#8fe068"/>
<circle cx="481.2" cy="166.5" r="1.6" fill="#8fe068"/>
<circle cx="481.2" cy="172.1" r="1.6" fill="#e59ad6"/>
<circle cx="481.2" cy="177.7" r="1.1" fill="#6d6d6d"/>
<circle cx="481.2" cy="183.3" r="1.1" fill="#6d6d6d"/>
<circle cx="481.2" cy="188.9" r="1.1" fill="#6d6d6d"/>
<circle cx="481.2" cy="194.5" r="1.1" fill="#4a4a4a"/>
<circle cx="481.2" cy="200.1" r="1.6" fill="#8fe068"/>
<circle cx="481.2" cy="205.7" r="1.1" fill="#6d6d6d"/>
<circle cx="481.2" cy="211.3" r="1.6" fill="#8fe068"/>
<circle cx="481.2" cy="216.9" r="1.6" fill="#8fe068"/>
<circle cx="481.2" cy="222.5" r="1.1" fill="#6d6d6d"/>
<circle cx="481.2" cy="228.1" r="1.1" fill="#6d6d6d"/>
<circle cx="481.2" cy="233.7" r="1.1" fill="#6d6d6d"/>
<circle cx="481.2" cy="239.3" r="1.1" fill="#6d6d6d"/>
<circle cx="481.2" cy="244.9" r="1.1" fill="#6d6d6d"/>
<circle cx="481.2" cy="250.3" r="1.6" fill="#8fe068"/>
<circle cx="481.2" cy="257.0" r="1.6" fill="#8fe068"/>
<circle cx="481.2" cy="263.7" r="1.6" fill="#8fe068"/>
<circle cx="481.2" cy="270.5" r="1.6" fill="#8fe068"/>
<circle cx="481.2" cy="330.7" r="1.6" fill="#8fe068"/>
<circle cx="565.0" cy="155.3" r="1.6" fill="#e59ad6"/>
<circle cx="565.0" cy="160.8" r="1.6" fill="#e59ad6"/>
<circle cx="483.0" cy="147.4" r="1.3" fill="#6d6d6d"/>
<circle cx="584.4" cy="152.4" r="1.6" fill="#8fe068"/>
<circle cx="584.4" cy="158.0" r="1.6" fill="#8fe068"/>
<circle cx="584.4" cy="163.6" r="1.6" fill="#8fe068"/>
<circle cx="584.4" cy="169.2" r="1.6" fill="#e59ad6"/>
<circle cx="584.4" cy="174.8" r="1.1" fill="#6d6d6d"/>
<circle cx="584.4" cy="180.4" r="1.1" fill="#6d6d6d"/>
<circle cx="584.4" cy="186.0" r="1.1" fill="#6d6d6d"/>
<circle cx="584.4" cy="191.6" r="1.1" fill="#6d6d6d"/>
<circle cx="584.4" cy="197.2" r="1.6" fill="#8fe068"/>
<circle cx="584.4" cy="202.8" r="1.1" fill="#6d6d6d"/>
<circle cx="584.4" cy="208.4" r="1.6" fill="#8fe068"/>
<circle cx="584.4" cy="214.0" r="1.6" fill="#8fe068"/>
<circle cx="584.4" cy="219.6" r="1.1" fill="#6d6d6d"/>
<circle cx="584.4" cy="225.2" r="1.1" fill="#6d6d6d"/>
<circle cx="584.4" cy="230.8" r="1.1" fill="#6d6d6d"/>
<circle cx="584.4" cy="236.4" r="1.1" fill="#6d6d6d"/>
<circle cx="584.4" cy="242.0" r="1.1" fill="#6d6d6d"/>
<circle cx="584.4" cy="248.0" r="1.6" fill="#8fe068"/>
<circle cx="584.4" cy="261.0" r="1.6" fill="#8fe068"/>
<circle cx="584.4" cy="267.7" r="1.6" fill="#8fe068"/>
<circle cx="584.4" cy="321.3" r="1.6" fill="#8fe068"/>
<circle cx="671.0" cy="152.4" r="1.6" fill="#e59ad6"/>
<circle cx="671.0" cy="158.0" r="1.6" fill="#e59ad6"/>
<circle cx="586.0" cy="144.5" r="1.3" fill="#6d6d6d"/>
<circle cx="698.5" cy="80.0" r="1.6" fill="#cfe3f5"/>
<circle cx="698.5" cy="85.6" r="1.2" fill="#6f8a5a"/>
<circle cx="698.5" cy="91.0" r="1.2" fill="#4a4a4a"/>
<circle cx="698.5" cy="97.0" r="1.4" fill="#d9534f"/>
<circle cx="882.5" cy="80.0" r="1.3" fill="#8a8a8a"/>
<circle cx="698.8" cy="71.3" r="1.2" fill="#8a7a6a"/>
<circle cx="455.5" cy="207.0" r="2.1" fill="#b9bdd0"/>
<circle cx="455.5" cy="254.0" r="2.1" fill="#b9bdd0"/>
<circle cx="559.0" cy="284.0" r="2.1" fill="#b9bdd0"/>
<circle cx="559.0" cy="338.0" r="2.1" fill="#b9bdd0"/>
<circle cx="665.0" cy="281.0" r="2.1" fill="#b9bdd0"/>
<circle cx="876.6" cy="143.0" r="2.1" fill="#b9bdd0"/>
<circle cx="876.6" cy="163.0" r="2.1" fill="#b9bdd0"/>
<rect x="290.4" y="170.8" width="1.2" height="3" fill="#e8921c"/><rect x="290.4" y="174.3" width="1.2" height="0.9" fill="#e8921c"/>
<rect x="259.4" y="237.3" width="1.2" height="3" fill="#e8921c"/><rect x="259.4" y="240.8" width="1.2" height="0.9" fill="#e8921c"/>
<rect x="259.4" y="264.3" width="1.2" height="3" fill="#e8921c"/><rect x="259.4" y="267.8" width="1.2" height="0.9" fill="#e8921c"/>
<rect x="336.9" y="237.3" width="1.2" height="3" fill="#e8921c"/><rect x="336.9" y="240.8" width="1.2" height="0.9" fill="#e8921c"/>
<rect x="456.4" y="139.3" width="1.2" height="3" fill="#e8921c"/><rect x="456.4" y="142.8" width="1.2" height="0.9" fill="#e8921c"/>
<rect x="459.4" y="184.8" width="1.2" height="3" fill="#e8921c"/><rect x="459.4" y="188.3" width="1.2" height="0.9" fill="#e8921c"/>
<rect x="456.4" y="281.3" width="1.2" height="3" fill="#e8921c"/><rect x="456.4" y="284.8" width="1.2" height="0.9" fill="#e8921c"/>
<text x="881" y="73.2" font-size="5.5" fill="#6a6a6a" font-family="Liberation Sans, sans-serif">?</text>
</svg>
<svg class="abs" style="left:505.4px;top:122.6px" width="184.4" height="327.2" viewBox="0 0 184.600 327.700" preserveAspectRatio="none"><use href="#dude"/></svg>
</div><!-- tab bar -->
<div class="abs" style="left:193px;top:23px;width:767px;height:24px;background:#212121"></div>
<div class="abs" style="left:194px;top:23px;width:131px;height:24px;background:#2e2e2e;border-bottom:1.5px solid #3f6a99;color:#fff;font-size:9.5px;font-weight:bold;line-height:22px;padding-left:6px;white-space:nowrap;overflow:hidden">D00D_T2V_VIEWCO…</div>
<div class="abs" style="left:327px;top:23px;width:26px;height:24px;background:#2a2a2a"></div>
<svg class="abs" style="left:334px;top:29px" width="12" height="12" viewBox="0 0 12 12" fill="none" stroke="#c8c8c8" stroke-width="1"><path d="M6 1.2V10.8M1.2 6H10.8"/></svg>

<!-- top bar -->
<div id="topbar" style="background:#313131">
  <div class="abs" style="left:0;top:0;width:19px;height:19px;background:#000;border-radius:0 0 4px 4px"></div>
  <svg class="abs" style="left:0;top:0" width="19" height="19" viewBox="0 0 19 19"><path d="M6.900 3.100H15.300L14.300 7.400H10L9.300 10.300H12.600L11.300 15.600H3.400L4.300 12.200H3.500L4.700 7.500H5.800Z" fill="#fff"/></svg>
  <svg class="abs" style="left:23px;top:7px" width="6" height="5" viewBox="0 0 6 5" fill="none" stroke="#c8c8c8" stroke-width="1.1"><path d="M0.8 1L3 3.4L5.2 1"/></svg>
  <div class="abs" style="left:42px;top:2.600px;font-size:9.4px;letter-spacing:-0.38px;color:#a8a8a8;line-height:13px;white-space:nowrap">D00D_T2V_VIEWCOMFY_01 (2)</div>
  <svg class="abs" style="left:176px;top:7.5px" width="6" height="5" viewBox="0 0 6 5" fill="none" stroke="#a8a8a8" stroke-width="1"><path d="M0.8 1L3 3.4L5.2 1"/></svg>

  <div class="abs" style="left:633.5px;top:0;width:67px;height:19.5px;background:#2a6d9c;border-radius:0 0 0 3px"></div>
  <svg class="abs" style="left:640px;top:3.5px" width="13" height="13" viewBox="0 0 24 24"><path fill="#fff" d="M20.5 11H19V7a2 2 0 0 0-2-2h-4V3.5a2.5 2.5 0 0 0-5 0V5H4a2 2 0 0 0-2 2v3.8h1.5a2.7 2.7 0 0 1 0 5.4H2V20a2 2 0 0 0 2 2h3.8v-1.5a2.7 2.7 0 0 1 5.4 0V22H17a2 2 0 0 0 2-2v-4h1.5a2.5 2.5 0 0 0 0-5z"/></svg>
  <div class="abs" style="left:657px;top:2.400px;font-size:9.4px;letter-spacing:-0.2px;color:#fff;-webkit-text-stroke:.25px #fff;line-height:13px">Manager</div>
  <div class="abs" style="left:700.5px;top:0;width:105px;height:19.5px;background:#1d1d1d"></div>
  <svg class="abs" style="left:707.5px;top:3px" width="12" height="12" viewBox="0 0 24 24"><path fill="#fff" d="M12 2l3 7 7.5.6-5.7 4.9 1.8 7.3L12 17.8 5.400 21.800l1.800-7.300L1.500 9.600 9 9z"/></svg>
  
  <svg class="abs" style="left:732.500px;top:2.500px" width="14" height="14" viewBox="0 0 14 14" fill="none" stroke="#fff" stroke-width="1.300" stroke-linecap="round"><path d="M3.600 8V4.600a2.700 2.700 0 0 1 5.400 0l2.300 7.400"/><rect x="1.300" y="8.600" width="4.600" height="3.800" rx=".8" stroke-width="1.100"/><path d="M8.200 12.400h4.600" stroke-width="1.500"/></svg>
  <svg class="abs" style="left:758.500px;top:2.500px" width="14" height="14" viewBox="0 0 14 14" fill="none" stroke="#fff" stroke-width="1.300" stroke-linecap="round"><path d="M3.600 7V4.600a2.700 2.700 0 0 1 5.400 0l2.300 7.400"/><rect x="1.300" y="7" width="4.800" height="5.400" rx=".8" fill="#fff" stroke-width="1"/><path d="M8.200 12.400h4.600" stroke-width="1.500"/></svg>
  <svg class="abs" style="left:785.500px;top:4px" width="12" height="11" viewBox="0 0 12 11"><path fill="#fff" d="M7 0.500L11.500 4.500L7 8.500V6C4 6 2 7 0.500 10C0.800 6 3 3.200 7 3Z"/></svg>

  <!-- monitors -->
  <div class="mon" style="left:810px"><b>0%</b><i>CPU</i></div>
  <div class="mon" style="left:854px"><u style="width:8px;background:#106a10"></u><b>20%</b><i>RAM</i></div>
  <div class="mon" style="left:898.500px"><b>0%</b><i>GPU</i></div>
  <div class="mon" style="left:943px;width:17px"><u style="width:1px;background:#2a6fb0"></u><i>VRAM</i></div>
</div>

<!-- sidebar -->
<div id="sidebar">
  <svg class="abs" style="left:5.400px;top:10.200px" width="13" height="13" viewBox="0 0 24 24" fill="none" stroke="#5b9be0" stroke-width="2.600" stroke-linecap="round" stroke-linejoin="round"><path d="M3 12a9 9 0 1 0 3-6.700L3 8"/><path d="M3 3v5h5"/><path d="M12 7.500v5l3 2" stroke-width="2.200"/></svg>
  <svg class="abs" style="left:5.100px;top:43.800px" width="11.500" height="11.500" viewBox="0 0 14 14" fill="none" stroke="#bcbcbc" stroke-width="1.400" stroke-linecap="round"><rect x="3" y="3.800" width="8" height="6.400" rx="2"/><path d="M0.800 7H3M11 7H13.200"/></svg>
  <svg class="abs" style="left:4.300px;top:76.200px" width="12.400" height="12.400" viewBox="0 0 15 15" fill="none" stroke="#bcbcbc" stroke-width="1.400"><circle cx="3.600" cy="5.200" r="2.300"/><circle cx="3.600" cy="11.400" r="2.300"/><circle cx="10" cy="11.400" r="2.300"/><path d="M10.800 1.400l2.600 2.800-2.600 2.800-2.600-2.800z"/></svg>
  <svg class="abs" style="left:5.400px;top:109.500px" width="11.500" height="11.500" viewBox="0 0 14 14" fill="none" stroke="#bcbcbc" stroke-width="1.400"><circle cx="3.200" cy="3.500" r="1.900"/><circle cx="10.800" cy="6" r="1.900"/><circle cx="10.800" cy="11.500" r="1.900"/><path d="M5 4L9 5.500M3.200 5.400C3.200 9 6 11 9 11.400"/></svg>
  <svg class="abs" style="left:5.400px;top:143.200px" width="11.500" height="11.500" viewBox="0 0 14 14" fill="none" stroke="#bcbcbc" stroke-width="1.400"><rect x="1" y="2" width="12" height="4" rx="1.300"/><rect x="1" y="8.300" width="4" height="4" rx="1.300"/><rect x="7" y="8.300" width="6" height="4" rx="1.300"/></svg>
  <svg class="abs" style="left:4.800px;top:486.800px" width="12" height="12" viewBox="0 0 12 12" fill="none" stroke="#bdbdbd" stroke-width="1.100"><circle cx="6" cy="6" r="5.200"/></svg>
  <div class="abs" style="left:4.800px;top:487px;width:12px;text-align:center;font-size:8.500px;font-weight:bold;color:#bdbdbd;line-height:12px">?</div>
</div>

<!-- queue panel -->
<div id="queue">
  <div id="qhead">QUEUE</div>
  <div class="abs" style="left:6.500px;top:30.800px;width:154.500px;height:155.700px;border-radius:3px;overflow:hidden;background:linear-gradient(rgba(0,0,0,0) 0%,rgba(0,0,0,0) 35%,rgba(0,0,0,.25) 55%,rgba(0,0,0,.8) 82%,#000 100%)">
    <svg class="abs" style="left:33.500px;top:0" width="87.800" height="155.700" viewBox="0 0 87.600 155.700" preserveAspectRatio="none"><use href="#dude2"/></svg>
    <div class="abs" style="left:0;top:95px;width:154.500px;height:61px;background:linear-gradient(rgba(0,0,0,0) 2%,rgba(0,0,0,.2) 18%,rgba(0,0,0,.6) 46%,rgba(0,0,0,.87) 67%,#000 82%,#000 100%)"></div>
    <svg class="abs" style="left:12px;top:117.500px" width="9" height="10" viewBox="0 0 9 10"><path d="M1 0.500L8.300 5L1 9.500Z" fill="#fff"/></svg>
    <svg class="abs" style="left:101.500px;top:118px" width="9" height="9" viewBox="0 0 9 9" fill="none" stroke="#fff" stroke-width="1.300"><path d="M0.700 3V0.700H3M6 0.700H8.300V3M8.300 6V8.300H6M3 8.300H0.700V6"/></svg>
    <svg class="abs" style="left:137.500px;top:117.500px" width="3" height="10" viewBox="0 0 3 10" fill="#fff"><circle cx="1.500" cy="1.300" r="1.100"/><circle cx="1.500" cy="5" r="1.100"/><circle cx="1.500" cy="8.700" r="1.100"/></svg>
    <div class="abs" style="left:66px;top:139.600px;width:77.500px;height:2.600px;border-radius:1.300px;background:#6a6a6a"></div>
  </div>
  <div class="abs" style="left:12.900px;top:162.500px;width:59.300px;height:17px;border-radius:3.500px;background:#1f4736"></div>
  <svg class="abs" style="left:17.500px;top:166px" width="10" height="9" viewBox="0 0 10 9" fill="none" stroke="#8be0ae" stroke-width="1.200" stroke-linecap="round" stroke-linejoin="round"><path d="M1 5L3.800 7.800L9 1.200"/></svg>
  <div class="abs" style="left:32.500px;top:164.500px;font-size:9.600px;font-weight:bold;color:#8be0ae;line-height:13px">438.25s</div>
</div>
<div id="qsplit" style="left:191.300px;width:1.800px;background:#3a3a3a"></div>

<!-- run toolbar -->
<div class="abs" style="left:381.500px;top:471px;width:187px;height:29.500px;background:#1f1f1f;border-radius:4px;box-shadow:0 0 2px rgba(0,0,0,.6)">
  <svg class="abs" style="left:5.500px;top:9px" width="5" height="11" viewBox="0 0 5 11" fill="#9a9a9a"><circle cx="1" cy="1.500" r=".75"/><circle cx="4" cy="1.500" r=".75"/><circle cx="1" cy="5.500" r=".75"/><circle cx="4" cy="5.500" r=".75"/><circle cx="1" cy="9.500" r=".75"/><circle cx="4" cy="9.500" r=".75"/></svg>
  <div class="abs" style="left:15px;top:2.300px;width:77px;height:25.300px;background:#60a5fa;border-radius:4px 0 0 4px"></div>
  <svg class="abs" style="left:23.500px;top:9.500px" width="11" height="10" viewBox="0 0 11 10" fill="none" stroke="#10264a" stroke-width="1.350" stroke-linecap="round"><path d="M0.800 2.200H6.500M0.800 5H7.500M0.800 7.800H7.500M9.800 7.800V1.800L8.200 2.800"/></svg>
  <div class="abs" style="left:40.500px;top:8px;font-size:9.500px;letter-spacing:-0.2px;color:#10264a;-webkit-text-stroke:.45px #10264a;line-height:13px">Run</div>
  <svg class="abs" style="left:73px;top:12px" width="9" height="6.300" viewBox="0 0 10 7" fill="none" stroke="#10264a" stroke-width="1.800" stroke-linecap="round" stroke-linejoin="round"><path d="M1 1.200L5 5.400L9 1.200"/></svg>
  <div class="abs" style="left:92px;top:2.300px;width:37px;height:25.300px;background:#0e0e0e;border:1px solid #3c3c3c;border-left:none;border-radius:0 4px 4px 0"></div>
  <div class="abs" style="left:100.800px;top:7.500px;font-size:11px;color:#fff;-webkit-text-stroke:.2px #fff;line-height:15px">1</div>
  <svg class="abs" style="left:116.500px;top:6px" width="8" height="18" viewBox="0 0 8 18" fill="none" stroke="#c8c8c8" stroke-width="1.100" stroke-linecap="round" stroke-linejoin="round"><path d="M1 5L4 2L7 5M1 13L4 16L7 13"/></svg>
  <svg class="abs" style="left:139.500px;top:10.500px" width="9" height="9" viewBox="0 0 9 9" fill="none" stroke="#8a8a8a" stroke-width="1.100" stroke-linecap="round"><path d="M1 1L8 8M8 1L1 8"/></svg>
  <svg class="abs" style="left:165px;top:9.500px" width="11" height="11" viewBox="0 0 11 11" fill="none" stroke="#8a8a8a" stroke-width="1.100"><rect x="1" y="1" width="9" height="9" rx="1.500"/></svg>
</div>

<!-- minimap -->
<div class="abs" style="left:802px;top:434.400px;width:158px;height:88px;background:#16171f;border-radius:6px 0 0 0;border-left:1px solid #2a2b33;border-top:1px solid #2a2b33;overflow:hidden">
  <svg class="abs" style="left:8px;top:5px" width="11" height="11" viewBox="0 0 11 11" fill="none" stroke="#d8d8d8" stroke-width="1"><circle cx="2.800" cy="3" r="1.500"/><path d="M4.300 3H10"/><circle cx="8" cy="8" r="1.500"/><path d="M1 8H6.500"/></svg>
  <svg class="abs" style="left:-1px;top:-1px" width="158" height="88" viewBox="802 434.400 158 88">
    <rect x="810.200" y="472.300" width="54.600" height="33.500" fill="#1a7fd2"/>
    <rect x="811.500" y="498" width="14.500" height="19" fill="#1a6fbd"/>
    <rect x="811" y="474" width="14" height="9" fill="#1c8be0"/><rect x="811" y="486" width="13" height="17" fill="#1c8be0"/>
    <rect x="829" y="479" width="10" height="8" fill="#1a72c0"/><rect x="842" y="478" width="10" height="9" fill="#1c8be0"/><rect x="829" y="491" width="10" height="10" fill="#1c8be0"/><rect x="842" y="490" width="12" height="12" fill="#1a72c0"/>
    <rect x="869.200" y="472.300" width="28.600" height="33.500" fill="#1a7fd2"/>
    <rect x="871" y="474" width="24" height="12" fill="#1c8be0"/><rect x="871" y="490" width="14" height="12" fill="#1a72c0"/>
    <rect x="901.300" y="472.300" width="36.500" height="50" fill="#1a7fd2"/>
    <rect x="902.500" y="476" width="11" height="10" fill="#1a6fbd"/><rect x="916" y="474" width="9" height="7" fill="#1c8be0"/><rect x="927" y="474" width="9" height="6" fill="#1c8be0"/>
    <rect x="903" y="488" width="10" height="34" fill="#1a72c0"/><rect x="915" y="484" width="21" height="38" fill="#1c86da"/>
    <rect x="940" y="472.300" width="20" height="50" fill="#1a7fd2"/>
    <path d="M838 488L865 492L898 496L915 497M865 503L898 499L926 497M913 522L915 497M918 520L926 497" stroke="#7a95b5" stroke-width=".6" fill="none" opacity=".7"/>
    <rect x="857" y="470.500" width="110" height="60" fill="none" stroke="#fff" stroke-width="1.600"/>
  </svg>
</div>
</div></body></html>
